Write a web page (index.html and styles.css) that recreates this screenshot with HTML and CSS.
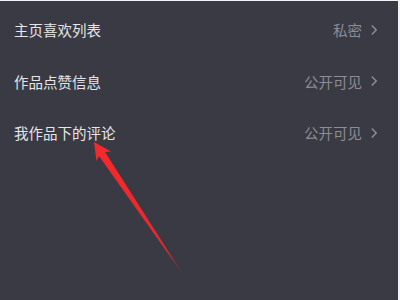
FILE: index.html
```html
<!DOCTYPE html>
<html lang="zh">
<head>
<meta charset="utf-8">
<link rel="stylesheet" href="styles.css">
</head>
<body>
<div class="screen">
  <div class="row">
    <span class="label">主页喜欢列表</span>
    <span class="value">私密<svg class="chev" width="8" height="12" viewBox="0 0 8 12"><path d="M1.8 1.5 L6.2 6 L1.8 10.5" fill="none" stroke="#8c8d94" stroke-width="1.5"/></svg></span>
  </div>
  <div class="row">
    <span class="label">作品点赞信息</span>
    <span class="value">公开可见<svg class="chev" width="8" height="12" viewBox="0 0 8 12"><path d="M1.8 1.5 L6.2 6 L1.8 10.5" fill="none" stroke="#8c8d94" stroke-width="1.5"/></svg></span>
  </div>
  <div class="row">
    <span class="label">我作品下的评论</span>
    <span class="value">公开可见<svg class="chev" width="8" height="12" viewBox="0 0 8 12"><path d="M1.8 1.5 L6.2 6 L1.8 10.5" fill="none" stroke="#8c8d94" stroke-width="1.5"/></svg></span>
  </div>
  <svg class="arrow" width="400" height="300" viewBox="0 0 400 300">
    <defs>
      <linearGradient id="g" x1="94" y1="142" x2="184" y2="276" gradientUnits="userSpaceOnUse">
        <stop offset="0" stop-color="#f7282d"/>
        <stop offset="0.8" stop-color="#ea282c"/>
        <stop offset="1" stop-color="#e0282c" stop-opacity="0.25"/>
      </linearGradient>
    </defs>
    <polygon points="94,142 111,151.5 105,152 184,276 99,156 96.5,161" fill="url(#g)"/>
  </svg>
</div>
</body>
</html>
```
FILE: styles.css
```css
html, body {
  margin: 0;
  padding: 0;
  background: #f4f4f6;
}
.screen {
  position: relative;
  width: 398px;
  height: 299px;
  margin-top: 1px;
  background: #393a43;
  padding-top: 3px;
  box-sizing: border-box;
  font-family: "Noto Sans CJK SC", "Noto Sans", sans-serif;
}
.row {
  height: 51.5px;
  display: flex;
  align-items: center;
  justify-content: space-between;
  padding: 0 20px 0 14px;
}
.label {
  color: #e6e6e8;
  font-size: 14.5px;
}
.value {
  color: #8c8d94;
  font-size: 14.5px;
  display: flex;
  align-items: center;
}
.chev {
  margin-left: 8px;
}
.arrow {
  position: absolute;
  left: 0;
  top: -1px;
}
```
